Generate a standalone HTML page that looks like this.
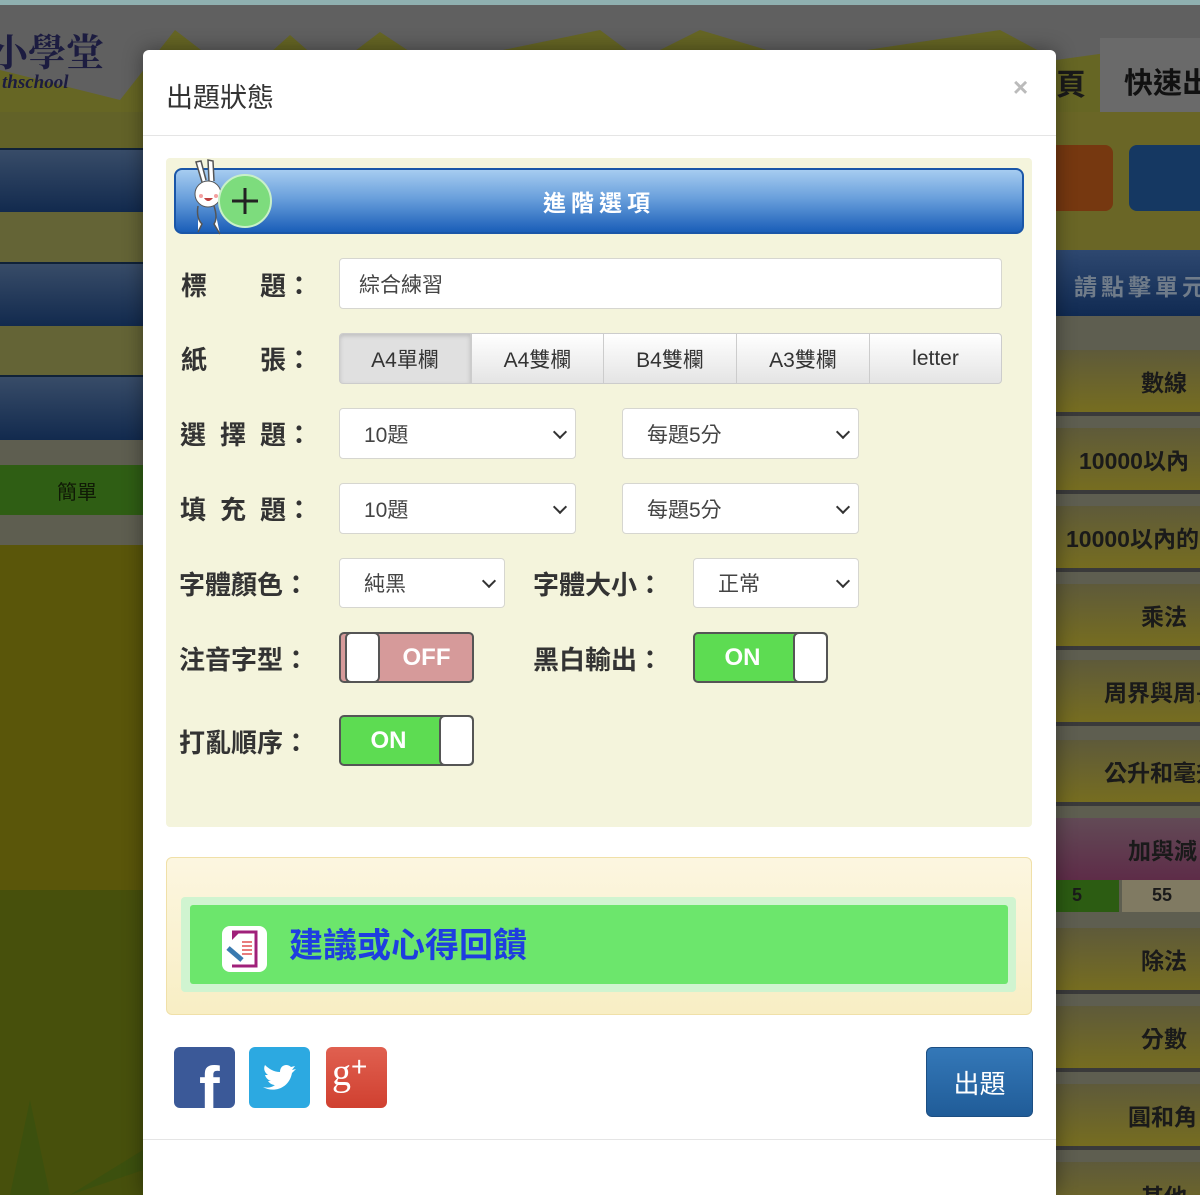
<!DOCTYPE html>
<html style="width:1200px;height:1195px;overflow:hidden"><head><meta charset="utf-8"><style>
*{box-sizing:border-box;margin:0;padding:0}
body{width:1200px;height:1195px;overflow:hidden;position:relative;background:#505048;font-family:"Liberation Sans","Noto Sans CJK TC",sans-serif}
.a{position:absolute}
.lbl{position:absolute;font-size:26px;font-weight:bold;color:#333;white-space:nowrap}
.inp{position:absolute;background:#fff;border:1px solid #d6d6d0;border-radius:4px;font-size:21px;color:#444;padding-left:24px;display:flex;align-items:center}
.sel::after{content:"";position:absolute;right:10px;top:50%;width:8px;height:8px;border-right:2px solid #333;border-bottom:2px solid #333;transform:translateY(-70%) rotate(45deg)}
.pb{position:absolute;top:333px;height:51px;background:linear-gradient(#fff,#e4e4e4);border:1px solid #ccc;font-size:21px;color:#333;display:flex;align-items:center;justify-content:center}
.tg{position:absolute;width:135px;height:51px;border:2px solid #555;border-radius:5px;overflow:hidden}
.tg .t{position:absolute;top:0;bottom:0;color:#fff;font-weight:bold;font-size:24px;display:flex;align-items:center;justify-content:center}
.tg .k{position:absolute;top:0;bottom:0;width:35px;background:#fff;border:2px solid #555;border-radius:6px}
.rt{position:absolute;left:1056px;width:144px;height:66px;background:linear-gradient(#5e5a3a,#766d20);color:#1a1a1a;font-weight:bold;font-size:23px;display:flex;align-items:center;padding-left:85px;border-bottom:4px solid #3a3a3a;white-space:nowrap;overflow:hidden}
</style></head><body>
<div class="a" style="left:0;top:0;width:1200px;height:5px;background:#8fb0b0"></div>
<div class="a" style="left:0;top:5px;width:1200px;height:115px;background:#606060"></div>
<svg class="a" style="left:0;top:20px" width="1200" height="110"><polygon fill="#666624" points="0,110 0,50 40,60 120,80 175,10 240,60 290,15 330,50 380,12 430,45 600,10 640,40 700,10 800,40 1000,10 1056,40 1200,20 1200,110"/></svg>
<div class="a" style="left:-10px;top:22px;font-size:38px;color:#1c1c40;font-family:'Noto Serif CJK SC',serif;font-weight:bold">小學堂</div>
<div class="a" style="left:2px;top:72px;font-size:19px;color:#1c1c40;font-style:italic;font-weight:bold;font-family:'Liberation Serif',serif">thschool</div>
<div class="a" style="left:0;top:112px;width:143px;height:36px;background:#626228"></div>
<div class="a" style="left:0;top:148px;width:143px;height:64px;background:linear-gradient(#384c68,#122a4e);border-top:2px solid #102238"></div>
<div class="a" style="left:0;top:212px;width:143px;height:50px;background:#646436"></div>
<div class="a" style="left:0;top:262px;width:143px;height:64px;background:linear-gradient(#384c68,#122a4e);border-top:2px solid #102238"></div>
<div class="a" style="left:0;top:326px;width:143px;height:49px;background:#646436"></div>
<div class="a" style="left:0;top:375px;width:143px;height:65px;background:linear-gradient(#384c68,#122a4e);border-top:2px solid #102238"></div>
<div class="a" style="left:0;top:440px;width:143px;height:25px;background:#5e5e50"></div>
<div class="a" style="left:0;top:465px;width:143px;height:50px;background:#2f5e14;color:#101a06;font-size:20px;display:flex;align-items:center;justify-content:flex-end;padding-right:46px">簡單</div>
<div class="a" style="left:0;top:515px;width:143px;height:30px;background:#5e5e50"></div>
<div class="a" style="left:0;top:545px;width:143px;height:345px;background:#5a560a"></div>
<div class="a" style="left:0;top:890px;width:143px;height:305px;background:#47500c"></div>
<svg class="a" style="left:0;top:1090px" width="143" height="105"><polygon fill="#3c500e" points="10,105 30,10 50,105"/><polygon fill="#3c500e" points="70,105 143,60 143,80"/></svg>
<div class="a" style="left:1056px;top:112px;width:144px;height:138px;background:#6a6626"></div>
<div class="a" style="left:1056px;top:60px;font-size:30px;font-weight:bold;color:#1a1a1a">頁</div>
<div class="a" style="left:1100px;top:38px;width:100px;height:74px;background:#6a6a6a;font-size:29px;font-weight:bold;color:#111;padding:22px 0 0 24px;white-space:nowrap;overflow:hidden">快速出題</div>
<div class="a" style="left:1056px;top:145px;width:57px;height:66px;background:#763810;border-radius:0 8px 8px 0"></div>
<div class="a" style="left:1129px;top:145px;width:71px;height:66px;background:#153862;border-radius:8px 0 0 8px"></div>
<div class="a" style="left:1056px;top:250px;width:144px;height:66px;background:linear-gradient(#2e4870,#102a52);color:#707c8a;font-size:23px;font-weight:bold;padding:18px 0 0 18px;white-space:nowrap;overflow:hidden;letter-spacing:4px">請點擊單元</div>
<div class="a" style="left:1056px;top:316px;width:144px;height:879px;background:#5e5e50"></div>
<div class="rt" style="top:350px">數線</div>
<div class="rt" style="top:428px;padding-left:23px">10000以內</div>
<div class="rt" style="top:506px;padding-left:10px">10000以內的</div>
<div class="rt" style="top:584px">乘法</div>
<div class="rt" style="top:660px;padding-left:48px">周界與周長</div>
<div class="rt" style="top:740px;padding-left:48px">公升和毫升</div>
<div class="rt" style="top:818px;background:linear-gradient(#624a56,#5e2c48);height:62px;border:0;padding-left:72px">加與減</div>
<div class="a" style="left:1056px;top:880px;width:63px;height:32px;background:#2c5c12;font-size:18px;font-weight:bold;color:#1a1a1a;padding:5px 0 0 16px">5</div>
<div class="a" style="left:1122px;top:880px;width:78px;height:32px;background:#807a62;font-size:18px;font-weight:bold;color:#1a1a1a;padding:5px 0 0 30px">55</div>
<div class="rt" style="top:928px">除法</div>
<div class="rt" style="top:1006px">分數</div>
<div class="rt" style="top:1084px;padding-left:72px">圓和角</div>
<div class="rt" style="top:1162px;align-items:flex-start;padding-top:16px">其他</div>
<div class="a" style="left:143px;top:50px;width:913px;height:1145px;background:#fff;border-radius:6px 6px 0 0;box-shadow:0 0 20px rgba(0,0,0,.4)"></div>
<div class="a" style="left:166px;top:76px;font-size:27px;color:#333">出題狀態</div>
<div class="a" style="left:1013px;top:72px;font-size:26px;color:#bbb;font-weight:bold">×</div>
<div class="a" style="left:143px;top:135px;width:913px;height:1px;background:#e5e5e5"></div>
<div class="a" style="left:166px;top:158px;width:866px;height:669px;background:#f4f4dc;border-radius:4px"></div>
<div class="a" style="left:174px;top:168px;width:850px;height:66px;border-radius:8px;background:linear-gradient(#a6ccf0,#6aa0dc 45%,#1a5eb8);border:2px solid #1a56a8;color:#fff;font-size:23px;font-weight:bold;letter-spacing:5px;display:flex;align-items:center;justify-content:center">進階選項</div>
<svg class="a" style="left:188px;top:158px" width="90" height="78">
<path d="M14 24 L8 4 L13 3 L18 22 M21 23 L20 2 L25 3 L26 23" fill="#fff" stroke="#555" stroke-width="1.5"/>
<ellipse cx="20" cy="36" rx="13" ry="13" fill="#fff" stroke="#555"/>
<circle cx="13" cy="38" r="2" fill="#f4a0a0"/><circle cx="28" cy="38" r="2" fill="#f4a0a0"/>
<path d="M16 40 Q20 46 25 40Z" fill="#c04040"/>
<path d="M10 48 Q8 60 14 66 L10 74 M26 48 Q30 60 26 66 L32 76" fill="#fff" stroke="#555" stroke-width="1.5"/>
<circle cx="57" cy="43" r="26" fill="#7ddc7d" stroke="#c8f0c8" stroke-width="2"/>
<path d="M57 30 V56 M44 43 H70" stroke="#222" stroke-width="3"/></svg>
<div class="lbl" style="left:181px;top:266px">標</div><div class="lbl" style="left:260px;top:266px">題：</div>
<div class="inp" style="left:339px;top:258px;width:663px;height:51px;font-size:21px;padding-left:19px">綜合練習</div>
<div class="lbl" style="left:181px;top:340px">紙</div><div class="lbl" style="left:260px;top:340px">張：</div>
<div class="pb" style="left:339px;width:132px;background:#e0e0e0;border-radius:4px 0 0 4px;box-shadow:inset 0 2px 4px rgba(0,0,0,.15)">A4單欄</div>
<div class="pb" style="left:471px;width:133px">A4雙欄</div>
<div class="pb" style="left:603px;width:134px">B4雙欄</div>
<div class="pb" style="left:736px;width:134px">A3雙欄</div>
<div class="pb" style="left:869px;width:133px;border-radius:0 4px 4px 0">letter</div>
<div class="lbl" style="left:180px;top:415px"><span style="letter-spacing:14px">選擇</span>題：</div>
<div class="inp sel" style="left:339px;top:408px;width:237px;height:51px">10題</div>
<div class="inp sel" style="left:622px;top:408px;width:237px;height:51px">每題5分</div>
<div class="lbl" style="left:180px;top:490px"><span style="letter-spacing:14px">填充</span>題：</div>
<div class="inp sel" style="left:339px;top:483px;width:237px;height:51px">10題</div>
<div class="inp sel" style="left:622px;top:483px;width:237px;height:51px">每題5分</div>
<div class="lbl" style="left:179px;top:565px">字體顏色：</div>
<div class="inp sel" style="left:339px;top:558px;width:166px;height:50px">純黑</div>
<div class="lbl" style="left:533px;top:565px">字體大小：</div>
<div class="inp sel" style="left:693px;top:558px;width:166px;height:50px">正常</div>
<div class="lbl" style="left:179px;top:640px">注音字型：</div>
<div class="tg" style="left:339px;top:632px;background:#d69a9a"><div class="t" style="left:40px;right:0">OFF</div><div class="k" style="left:4px;top:-2px;bottom:-2px"></div></div>
<div class="lbl" style="left:533px;top:640px">黑白輸出：</div>
<div class="tg" style="left:693px;top:632px;background:#5ddc52"><div class="t" style="left:0;right:36px">ON</div><div class="k" style="right:-2px;top:-2px;bottom:-2px"></div></div>
<div class="lbl" style="left:179px;top:723px">打亂順序：</div>
<div class="tg" style="left:339px;top:715px;background:#5ddc52"><div class="t" style="left:0;right:36px">ON</div><div class="k" style="right:-2px;top:-2px;bottom:-2px"></div></div>
<div class="a" style="left:166px;top:857px;width:866px;height:158px;background:linear-gradient(#fcf6e0,#f8eec4);border:1px solid #f0e0a8;border-radius:6px"></div>
<div class="a" style="left:181px;top:897px;width:835px;height:95px;background:#d0f4d0;border-radius:4px"></div>
<div class="a" style="left:190px;top:905px;width:818px;height:79px;background:#6ce66c;border-radius:3px"></div>
<div class="a" style="left:222px;top:926px;width:45px;height:46px;background:#fff;border-radius:8px"></div>
<svg class="a" style="left:222px;top:926px" width="45" height="46"><path d="M10 6 H34 V40 H10" fill="none" stroke="#a0207a" stroke-width="3"/><path d="M10 6 L18 6 L10 14Z" fill="#a0207a"/><path d="M20 16H30M20 20H30M20 24H30M20 28H30" stroke="#e05050" stroke-width="1.5"/><path d="M6 22 L20 34" stroke="#3a7ab0" stroke-width="5"/></svg>
<div class="a" style="left:289px;top:918px;font-size:34px;font-weight:bold;color:#1e3ee0">建議或心得回饋</div>
<div class="a" style="left:174px;top:1047px;width:61px;height:61px;background:#3b5998;border-radius:6px;overflow:hidden"><div style="position:absolute;left:25px;top:12px;font-size:62px;font-weight:bold;color:#fff;line-height:1">f</div></div>
<div class="a" style="left:249px;top:1047px;width:61px;height:61px;background:#2ca9e1;border-radius:6px"></div>
<svg class="a" style="left:249px;top:1047px" width="61" height="61"><path d="M14 40 C24 46 40 42 43 26 L47 22 L43 23 L46 19 L42 20 C38 16 31 18 31 25 C25 25 20 22 16 18 C14 22 16 26 19 28 L16 28 C17 31 19 33 22 34 L19 34 C21 37 24 38 26 38 C22 41 18 41 14 40Z" fill="#fff"/></svg>
<div class="a" style="left:326px;top:1047px;width:61px;height:61px;background:linear-gradient(#e06050,#d04030);border-radius:6px;color:#fff;font-family:'Liberation Serif',serif;font-size:38px;padding:4px 0 0 6px;overflow:hidden">g<span style="font-size:28px;vertical-align:top;font-family:'Liberation Sans'">+</span></div>
<div class="a" style="left:926px;top:1047px;width:107px;height:70px;background:linear-gradient(#3478b8,#205c98);border:1px solid #1c4e82;border-radius:6px;color:#fff;font-size:26px;display:flex;align-items:center;justify-content:center">出題</div>
<div class="a" style="left:143px;top:1139px;width:913px;height:1px;background:#e5e5e5"></div>
</body></html>
